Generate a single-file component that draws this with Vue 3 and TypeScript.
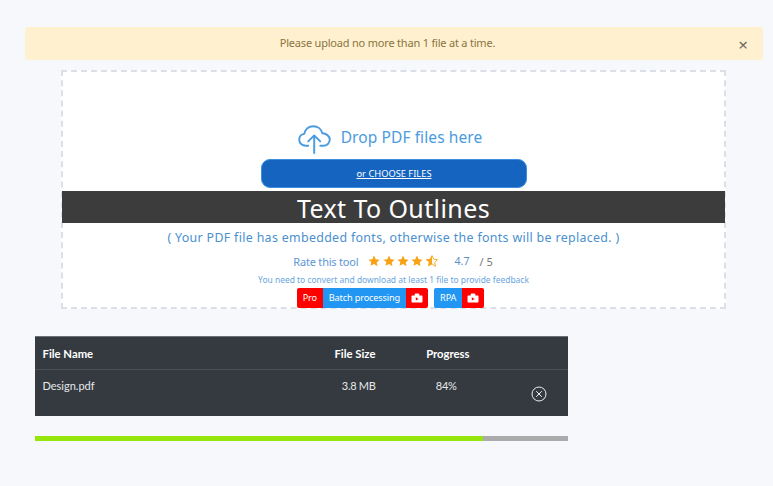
<script setup lang="ts">
interface Upload { name: string; size: string; progress: number }
const upload: Upload = { name: 'Design.pdf', size: '3.8 MB', progress: 84 }
const stars: number[] = [1, 2, 3, 4]
const starPath = 'M6 .6l1.7 3.6 3.9.5-2.9 2.7.8 3.9L6 8.9l-3.5 1.9.8-3.9L.4 4.7l3.9-.5z'
</script>

<template>
  <main class="page">
    <div class="alert">
      <span class="alert-text">Please upload no more than 1 file at a time.</span>
      <span class="alert-close">×</span>
    </div>

    <section class="drop">
      <div class="drop-head">
        <svg class="cloud" viewBox="0 0 34 30" width="33" height="29" fill="none" stroke="#4a9be0" stroke-width="2" stroke-linecap="round" stroke-linejoin="round">
          <path d="M10.500 21.500H8C4.200 21.500 1.200 18.800 1.200 15.200c0-3 2.200-5.500 5.200-6C7.300 4.500 11 1.200 15.800 1.200c4.600 0 8.400 3 9.300 7.400 3.800.2 7.700 2.600 7.700 6.500 0 3.600-3 6.400-6.600 6.400H23" />
          <path d="M16.700 29V11M10.500 17l6.200-6.200 6.200 6.200" />
        </svg>
        <span class="drop-title">Drop PDF files here</span>
      </div>
      <div class="choose"><a class="choose-link">or CHOOSE FILES</a></div>
      <h1 class="banner">Text To Outlines</h1>
      <p class="note">( Your PDF file has embedded fonts, otherwise the fonts will be replaced. )</p>
      <div class="rate">
        <span class="rate-label">Rate this tool</span>
        <span class="stars">
          <svg v-for="s in stars" :key="s" viewBox="0 0 12 12" width="12" height="12"><path :d="starPath" fill="#f7a315" /></svg>
          <svg viewBox="0 0 12 12" width="12" height="12">
            <path :d="starPath" fill="none" stroke="#f7a315" stroke-width=".9" />
            <path d="M6 .6v8.300L2.500 10.800l.8-3.900L.4 4.700l3.900-.5z" fill="#f7a315" />
          </svg>
        </span>
        <span class="score">4.7</span>
        <span class="out-of">/ 5</span>
      </div>
      <p class="hint">You need to convert and download at least 1 file to provide feedback</p>
      <div class="tags">
        <div class="tag">
          <span class="tag-red tag-pro">Pro</span>
          <span class="tag-blue">Batch processing</span>
          <span class="tag-red tag-icon">
            <svg viewBox="0 0 12 10" width="12" height="10"><path d="M1.500 2.500h2.200V1.300C3.700.8 4 .5 4.500.5h3c.5 0 .8.300.8.800v1.200h2.200c.6 0 1 .4 1 1v5c0 .6-.4 1-1 1h-9c-.6 0-1-.4-1-1v-5c0-.6.400-1 1-1z" fill="#fff" /><path d="M4.800 4.300v3.200L7.600 5.900z" fill="#f00" /></svg>
          </span>
        </div>
        <div class="tag">
          <span class="tag-blue">RPA</span>
          <span class="tag-red tag-icon">
            <svg viewBox="0 0 12 10" width="12" height="10"><path d="M1.500 2.500h2.200V1.300C3.700.8 4 .5 4.500.5h3c.5 0 .8.300.8.800v1.200h2.200c.6 0 1 .4 1 1v5c0 .6-.4 1-1 1h-9c-.6 0-1-.4-1-1v-5c0-.6.400-1 1-1z" fill="#fff" /><path d="M4.800 4.300v3.200L7.600 5.900z" fill="#f00" /></svg>
          </span>
        </div>
      </div>
    </section>

    <section class="files">
      <div class="row head">
        <span class="c-name">File Name</span>
        <span class="c-size">File Size</span>
        <span class="c-prog">Progress</span>
      </div>
      <div class="row body">
        <span class="c-name">{{ upload.name }}</span>
        <span class="c-size">{{ upload.size }}</span>
        <span class="c-prog">{{ upload.progress }}%</span>
        <svg class="remove" viewBox="0 0 16 16" width="16" height="16" fill="none" stroke="#eef0f2" stroke-width="1">
          <circle cx="8" cy="8" r="7" />
          <path d="M5.200 5.200l5.600 5.600M10.800 5.200l-5.600 5.600" />
        </svg>
      </div>
    </section>

    <div class="bar"><div class="bar-fill" :style="{ width: upload.progress + '%' }"></div></div>
  </main>
</template>

<style>
html, body { margin: 0; background: #f6f8fb; }
</style>

<style scoped>
.page {
  height: 486px;
  box-sizing: border-box;
  padding-top: 27px;
  overflow: hidden;
  font-family: "Noto Sans", "Open Sans", sans-serif;
}
.alert {
  margin: 0 10px 0 25px;
  height: 33px;
  background: #fff0cf;
  border-radius: 3px;
  display: flex;
  align-items: center;
  justify-content: center;
  position: relative;
  color: #8a7440;
}
.alert-text { font-size: 11px; letter-spacing: -0.2px; position: relative; top: -1px; left: -6.500px; }
.alert-close { position: absolute; right: 15px; top: 7px; font-size: 17px; line-height: 22px; color: #6f6a5c; }
.drop {
  margin: 10px 47px 0 61px;
  height: 239px;
  box-sizing: border-box;
  background: #fff;
  border: 2px dashed #dbe0e8;
  text-align: center;
  padding-top: 52px;
}
.drop-head { display: flex; justify-content: center; align-items: center; gap: 10px; height: 35px; padding-right: 7px; }
.cloud { flex: none; margin-top: -4px; }
.drop-title { font-size: 15.500px; color: #4a9be0; letter-spacing: .1px; position: relative; top: -5px; }
.choose {
  width: 266px;
  height: 29px;
  margin-left: 198px;
  background: #1565c0;
  border: 1px solid #3d8fe0;
  box-sizing: border-box;
  border-radius: 9px;
  display: flex;
  align-items: center;
  justify-content: center;
}
.choose-link { color: #fff; font-size: 9.300px; text-decoration: underline; }
.banner {
  margin: 3px -1px 0;
  height: 32px;
  background: #3c3c3c;
  color: #fff;
  font-weight: 400;
  font-size: 25px;
  line-height: 34px;
  letter-spacing: .4px;
}
.note { margin: 5px 0 0; font-size: 12.400px; line-height: 20px; color: #4a90d0; letter-spacing: .33px; }
.rate { margin-top: 3px; display: flex; justify-content: center; align-items: center; height: 20px; padding-right: 1px; font-size: 11px; }
.rate-label { color: #5b96d6; letter-spacing: -0.2px; }
.stars { display: flex; gap: 2.300px; margin-left: 10px; }
.score { margin-left: 17px; color: #5b8fc5; font-size: 10.500px; }
.out-of { margin-left: 10px; color: #777; }
.hint { margin: 2px 0 0; font-size: 8.450px; line-height: 14px; color: #6aa5de; }
.tags { margin-top: 1px; display: flex; justify-content: center; gap: 6px; padding-right: 6px; }
.tag { display: flex; height: 20px; border-radius: 2px; overflow: hidden; font-size: 9.200px; letter-spacing: -0.15px; line-height: 20px; color: #fff; }
.tag-red { background: #f00; padding: 0 6px; }
.tag-pro { width: 26px; box-sizing: border-box; }
.tag-blue { background: #2196f3; padding: 0 6px; }
.tag-icon { display: flex; align-items: center; padding: 0 5px; }
.files {
  margin: 27px 0 0 34.500px;
  width: 533.500px;
  height: 80px;
  box-sizing: border-box;
  background: #343a40;
  border-top: 1px solid #6c7075;
  color: #fff;
  font-family: "Lato", "Noto Sans", sans-serif;
  font-size: 11px;
}
.row { display: flex; position: relative; padding-left: 8px; }
.head { height: 32px; align-items: center; border-bottom: 1px solid #4b5157; font-weight: 700; font-size: 11.300px; }
.body { padding-top: 9px; color: #e6e8ea; line-height: 14px; }
.c-name { width: 253px; }
.c-size { width: 80px; text-align: right; }
.c-prog { width: 94px; text-align: right; }
.body .c-size, .body .c-prog { letter-spacing: -0.3px; }
.body .c-prog { width: 81px; }
.remove { position: absolute; left: 496.500px; top: 16px; }
.bar { margin: 20px 0 0 34.500px; width: 533.500px; height: 5px; background: #ababab; }
.bar-fill { height: 100%; background: #96e60e; }
</style>
